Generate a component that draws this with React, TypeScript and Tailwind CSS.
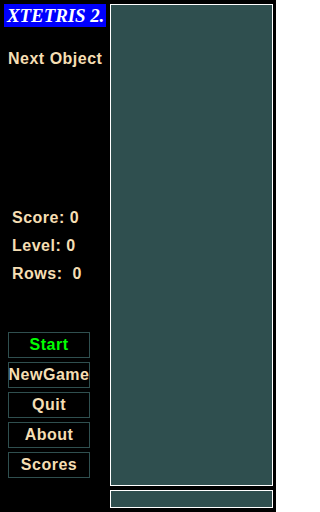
export default function App() {
  const buttons = [
    { label: 'Start', color: 'text-[#00ff00]' },
    { label: 'NewGame', color: 'text-[#f5deb3]' },
    { label: 'Quit', color: 'text-[#f5deb3]' },
    { label: 'About', color: 'text-[#f5deb3]' },
    { label: 'Scores', color: 'text-[#f5deb3]' },
  ];

  return (
    <div className="w-[276px] h-[512px] bg-black flex overflow-hidden font-['Liberation_Sans',Arial,sans-serif]">
      {/* Left panel */}
      <div className="w-[110px] flex flex-col">
        <div className="mt-[4px] ml-[4px] w-[102px] h-[23px] bg-[#0000ff] overflow-hidden whitespace-nowrap pl-[3px] leading-[23px] text-white italic font-bold text-[19px] tracking-[-0.1px] font-['Liberation_Serif','Times_New_Roman',serif]">
          XTETRIS 2.
        </div>

        <div className="mt-[23px] ml-[8px] text-[#f5deb3] font-bold text-[16px] tracking-[0.5px] leading-[18px]">
          Next Object
        </div>

        <div className="mt-[141px] ml-[12px] flex flex-col gap-[10px] text-[#f5deb3] font-bold text-[16px] tracking-[0.5px] leading-[18px] whitespace-pre">
          <div>Score: 0</div>
          <div>Level: 0</div>
          <div>Rows:  0</div>
        </div>

        <div className="mt-[49px] ml-[8px] flex flex-col gap-[4px]">
          {buttons.map((b) => (
            <div
              key={b.label}
              className={`w-[82px] h-[26px] border border-[#2f4f4f] overflow-hidden whitespace-nowrap flex items-center justify-center font-bold text-[16px] tracking-[0.5px] ${b.color}`}
            >
              {b.label}
            </div>
          ))}
        </div>
      </div>

      {/* Board */}
      <div className="pt-[4px] flex flex-col gap-[4px]">
        <div className="w-[163px] h-[482px] border border-white bg-[#2f4f4f]" />
        <div className="w-[163px] h-[18px] border border-white bg-[#2f4f4f]" />
      </div>
    </div>
  );
}
